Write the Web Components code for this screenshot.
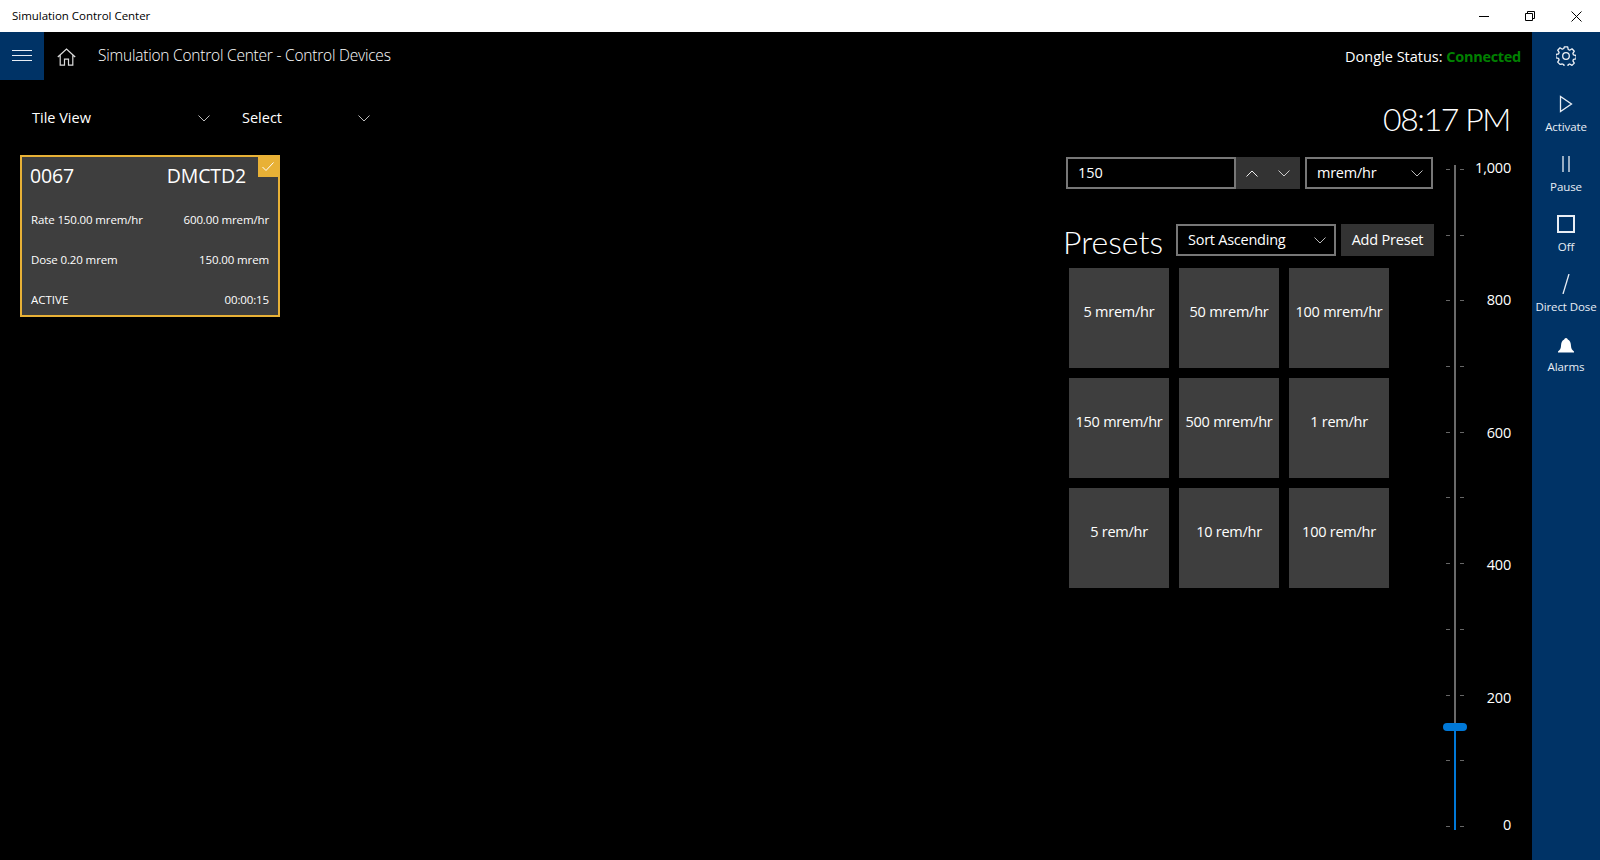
<!DOCTYPE html>
<html>
<head>
<meta charset="utf-8">
<title>Simulation Control Center</title>
<style>
  html, body { margin: 0; height: 100%; background: #000; overflow: hidden; }
  body { font-family: "Open Sans", "Liberation Sans", sans-serif; color: #fff; }
  scc-app { height: 860px; }
</style>
</head>
<body>
<scc-app></scc-app>

<script>
const CHEVRON = `<svg width="12" height="7" viewBox="0 0 12 7" fill="none" stroke="currentColor" stroke-width="1"><path d="M.5.5 6 6l5.500-5.500"/></svg>`;

class SccTitleBar extends HTMLElement {
  constructor() {
    super();
    this.attachShadow({ mode: 'open' }).innerHTML = `
      <style>
        :host { display: flex; align-items: center; height: 32px; background: #fff; color: #000; flex: none; }
        .name { flex: 1; padding: 0 0 2px 12px; font-size: 11.500px; letter-spacing: -.03px; }
        .btn { width: 46px; height: 32px; display: flex; align-items: center; justify-content: center; }
        .btn:last-child { width: 47px; }
      </style>
      <div class="name"><slot></slot></div>
      <div class="btn"><svg width="10" height="10" fill="none" stroke="#000"><path d="M0 5.500h10"/></svg></div>
      <div class="btn"><svg width="10" height="10" fill="none" stroke="#000"><path d="M.5 2.500h7v7h-7zM2.500 2.500v-2h7v7h-2"/></svg></div>
      <div class="btn"><svg width="11" height="11" fill="none" stroke="#000"><path d="M.5.5l10 10M10.500.5l-10 10"/></svg></div>
    `;
  }
}

// dropdown, borderless on the top row and boxed everywhere else
class SccCombo extends HTMLElement {
  constructor() {
    super();
    this.attachShadow({ mode: 'open' }).innerHTML = `
      <style>
        :host { display: flex; align-items: center; justify-content: space-between; box-sizing: border-box;
                height: 32px; padding: 0 10px 2px 10px; font-size: 14.500px; letter-spacing: -.25px; color: #fff; }
        :host([boxed]) { border: 2px solid #777; padding-right: 8px; }
        svg { color: #bbb; display: block; margin-top: 2px; }
      </style>
      <span><slot></slot></span>${CHEVRON}
    `;
  }
}

class SccDeviceCard extends HTMLElement {
  constructor() {
    super();
    this.attachShadow({ mode: 'open' }).innerHTML = `
      <style>
        :host { display: flex; flex-direction: column; position: relative; box-sizing: border-box; width: 260px; height: 162px;
                border: 2px solid #e8b136; background: #3e3e3e; padding: 0 9px 0 9px; font-size: 11.500px; letter-spacing: -.13px; overflow: hidden; }
        .row { display: flex; justify-content: space-between; flex: none; height: 40px; align-items: center; }
        .head { font-size: 19.500px; height: 37px; letter-spacing: -.12px; margin: 0 0 5px -1px; padding-right: 23px; }
        .state { letter-spacing: 0; }
        .check { position: absolute; top: 0; right: 0; width: 20px; height: 20px; background: #e8b136;
                 display: flex; align-items: center; justify-content: center; }
      </style>
      <div class="row head"><span>0067</span><span>DMCTD2</span></div>
      <div class="row"><span>Rate 150.00 mrem/hr</span><span>600.00 mrem/hr</span></div>
      <div class="row"><span>Dose 0.20 mrem</span><span>150.00 mrem</span></div>
      <div class="row"><span class="state">ACTIVE</span><span>00:00:15</span></div>
      <div class="check"><svg width="12" height="10" fill="none" stroke="#fff"><path d="M.5 5l3.500 3.500L11.500.5"/></svg></div>
    `;
  }
}

class SccTile extends HTMLElement {
  constructor() {
    super();
    this.attachShadow({ mode: 'open' }).innerHTML = `
      <style>
        :host { display: flex; align-items: center; justify-content: center; width: 100px; height: 100px; background: #3e3e3e;
                font-size: 14.500px; letter-spacing: -.25px; white-space: nowrap; padding-bottom: 14px; box-sizing: border-box; }
      </style>
      <slot></slot>
    `;
  }
}

class SccSlider extends HTMLElement {
  constructor() {
    super();
    const ticks = Array.from({ length: 11 }, () => `<i></i>`).join('');
    this.attachShadow({ mode: 'open' }).innerHTML = `
      <style>
        :host { display: block; position: relative; width: 68px; height: 665px; font-size: 14.500px; letter-spacing: -.2px; }
        .track { position: absolute; left: 11px; top: 0; width: 2px; height: 558px; background: #6a6a6a; }
        .fill { position: absolute; left: 11px; top: 562px; bottom: 0; width: 2px; background: #0078d7; }
        .thumb { position: absolute; left: 0; top: 558px; width: 24px; height: 8px; border-radius: 4px; background: #0078d7; }
        .ticks { position: absolute; left: 3px; top: 4px; width: 18px; height: 658px; display: flex; flex-direction: column; justify-content: space-between; }
        .ticks i { display: block; height: 1px; background: linear-gradient(90deg, #666 0 4px, transparent 4px 14px, #666 14px); }
        .labels { position: absolute; right: 0; top: -7px; text-align: right; display: flex; flex-direction: column; gap: 112px; }
        .labels span { line-height: 20px; display: block; }
        .labels span:nth-child(3), .labels span:nth-child(5) { margin-top: 1px; }
        .labels span:last-child { margin-top: -5px; }
      </style>
      <div class="track"></div>
      <div class="fill"></div>
      <div class="ticks">${ticks}</div>
      <div class="thumb"></div>
      <div class="labels"><span>1,000</span><span>800</span><span>600</span><span>400</span><span>200</span><span>0</span></div>
    `;
  }
}

class SccCommand extends HTMLElement {
  constructor() {
    super();
    this.attachShadow({ mode: 'open' }).innerHTML = `
      <style>
        :host { display: flex; flex-direction: column; align-items: center; height: 60px; width: 68px; flex: none;
                font-size: 11.500px; letter-spacing: -.1px; color: #e8eef5; white-space: nowrap; }
        .icon { height: 40px; display: flex; align-items: center; justify-content: center; }
        .text { line-height: 16px; margin-top: -5px; }
      </style>
      <div class="icon"><slot name="icon"></slot></div>
      <div class="text"><slot></slot></div>
    `;
  }
}

class SccApp extends HTMLElement {
  constructor() {
    super();
    const presets = ['5 mrem/hr', '50 mrem/hr', '100 mrem/hr', '150 mrem/hr', '500 mrem/hr', '1 rem/hr', '5 rem/hr', '10 rem/hr', '100 rem/hr'];
    this.attachShadow({ mode: 'open' }).innerHTML = `
      <style>
        :host { display: flex; flex-direction: column; }
        .body { flex: 1; display: flex; min-height: 0; }
        .main { flex: 1; display: flex; flex-direction: column; min-width: 0; }
        .top { display: flex; align-items: center; height: 48px; flex: none; }
        .burger { width: 44px; height: 48px; background: #003366; display: flex; align-items: center; justify-content: center; }
        .home { width: 44px; display: flex; justify-content: center; padding-top: 2px; }
        .title { flex: 1; padding: 0 0 2px 10px; font-size: 15.500px; font-weight: 300; letter-spacing: -.22px; }
        .dongle { font-size: 14.500px; letter-spacing: 0; padding: 0 11px 0 0; }
        .dongle b { color: #008000; font-weight: 700; letter-spacing: -.3px; }
        .content { flex: 1; display: flex; min-height: 0; }
        .left { flex: 1; padding: 22px 0 0 20px; }
        .filters { display: flex; margin-bottom: 13px; height: 40px; align-items: flex-start; }
        .filters scc-combo:first-child { width: 190px; margin: 0 20px 0 2px; padding-right: 2px; letter-spacing: 0; }
        .filters scc-combo:last-child { width: 140px; padding-right: 2px; letter-spacing: 0; }
        .right { width: 372px; flex: none; padding-top: 6px; box-sizing: border-box; padding-left: 2px; }
        .clock { font-family: Lato, "Open Sans", sans-serif; white-space: nowrap; text-align: right; font-size: 32px; letter-spacing: -1.400px; font-weight: 300; height: 71px; line-height: 66px; margin-right: -74px; }
        .value { display: flex; height: 32px; }
        .input { width: 170px; box-sizing: border-box; border: 2px solid #777; font-size: 14.500px; padding-left: 10px; line-height: 27px; }
        .spin { width: 64px; background: #333; display: flex; align-items: center; justify-content: space-around; color: #ccc; }
        .spin .up { color: #eee; }
        .unit { width: 128px; margin-left: 5px; flex: none; }
        .presets-head { display: flex; align-items: flex-start; margin-top: 35px; height: 44px; }
        h2 { font-family: Lato, "Open Sans", sans-serif; margin: 0 0 0 -3px; font-size: 32px; font-weight: 300; line-height: 36px; width: 113px; flex: none; }
        .sort { width: 160px; flex: none; }
        .add { width: 93px; height: 32px; margin-left: 5px; padding-bottom: 1px; box-sizing: border-box; flex: none; background: #333; font-size: 14.500px; letter-spacing: -.2px; display: flex; align-items: center; justify-content: center; }
        .grid { display: grid; grid-template-columns: repeat(3, 100px); gap: 10px; margin-left: 3px; }
        .side { padding: 0 0 0 7px; width: 96px; flex: none; box-sizing: border-box; }
        .rail { width: 68px; background: #003366; flex: none; display: flex; flex-direction: column; }
        .gear { height: 48px; display: flex; align-items: center; justify-content: center; margin-bottom: 4px; }
        .bell { margin-top: 3px; }
      </style>
      <scc-title-bar>Simulation Control Center</scc-title-bar>
      <div class="body">
        <div class="main">
          <div class="top">
            <div class="burger"><svg width="20" height="12" fill="none" stroke="#e8eef5"><path d="M0 .5h20M0 5.500h20M0 10.500h20"/></svg></div>
            <div class="home"><svg width="19" height="18" viewBox="0 0 19 18" fill="none" stroke="#ddd" stroke-width="1.200"><path d="M.8 9 9.500 1l8.700 8M3.200 7.200v9.900h4.300v-6h4v6h4.300V7.200"/></svg></div>
            <div class="title">Simulation Control Center - Control Devices</div>
            <div class="dongle">Dongle Status: <b>Connected</b></div>
          </div>
          <div class="content">
            <div class="left">
              <div class="filters"><scc-combo>Tile View</scc-combo><scc-combo>Select</scc-combo></div>
              <scc-device-card></scc-device-card>
            </div>
            <div class="right">
              <div class="clock">08:17 PM</div>
              <div class="value">
                <div class="input">150</div>
                <div class="spin">
                  <svg class="up" width="12" height="7" viewBox="0 0 12 7" fill="none" stroke="currentColor"><path d="M.5 6.500 6 1l5.500 5.500"/></svg>
                  ${CHEVRON}
                </div>
                <scc-combo boxed class="unit">mrem/hr</scc-combo>
              </div>
              <div class="presets-head">
                <h2>Presets</h2>
                <scc-combo boxed class="sort">Sort Ascending</scc-combo>
                <div class="add">Add Preset</div>
              </div>
              <div class="grid">${presets.map(p => `<scc-tile>${p}</scc-tile>`).join('')}</div>
            </div>
            <div class="side"><scc-slider style="margin-top:85px"></scc-slider></div>
          </div>
        </div>
        <div class="rail">
          <div class="gear"><svg width="20" height="20" viewBox="0 0 20 20" fill="none" stroke="#eef2f7" stroke-width="1.300" stroke-linejoin="round"><circle cx="10" cy="10" r="3.300"/><path d="M8.300.9h3.400l.5 2.600 1.500.7 2.300-1.400 2.300 2.400-1.400 2.200.6 1.500 2.600.6v3.300l-2.600.5-.6 1.600 1.400 2.200-2.300 2.300-2.300-1.400-1.500.7-.5 2.600H8.300l-.5-2.600-1.500-.7L4 18.400l-2.300-2.300 1.400-2.200-.6-1.600-2.600-.5V8.500l2.600-.6.6-1.500L1.700 4.200 4 1.800l2.300 1.400 1.500-.7z"/></svg></div>
          <scc-command><svg slot="icon" width="14" height="18" fill="none" stroke="#e8eef5" stroke-width="1.300"><path d="M1.500 1.500v15l11-7.500z"/></svg>Activate</scc-command>
          <scc-command><svg slot="icon" width="8" height="16" fill="none" stroke="#e8eef5" stroke-width="1.300"><path d="M1 0v16M7 0v16"/></svg>Pause</scc-command>
          <scc-command><svg slot="icon" width="18" height="18" fill="none" stroke="#e8eef5" stroke-width="2"><path d="M1 1h16v16H1z"/></svg>Off</scc-command>
          <scc-command><svg slot="icon" width="8" height="20" fill="none" stroke="#e8eef5" stroke-width="1.300"><path d="M7 0 1 20"/></svg>Direct Dose</scc-command>
          <scc-command><svg slot="icon" class="bell" width="16" height="16" fill="#fff"><path d="M8 0c1 0 1.500 .8 1.800 1.500C12.200 2.300 12.800 5 13 8c.2 2.500 1 4 3 5.500v1H0v-1C2 12 2.800 10.500 3 8c.2-3 .8-5.700 3.200-6.500C6.500 .8 7 0 8 0z"/></svg>Alarms</scc-command>
        </div>
      </div>
    `;
  }
}

customElements.define('scc-title-bar', SccTitleBar);
customElements.define('scc-combo', SccCombo);
customElements.define('scc-device-card', SccDeviceCard);
customElements.define('scc-tile', SccTile);
customElements.define('scc-slider', SccSlider);
customElements.define('scc-command', SccCommand);
customElements.define('scc-app', SccApp);
</script>
</body>
</html>
